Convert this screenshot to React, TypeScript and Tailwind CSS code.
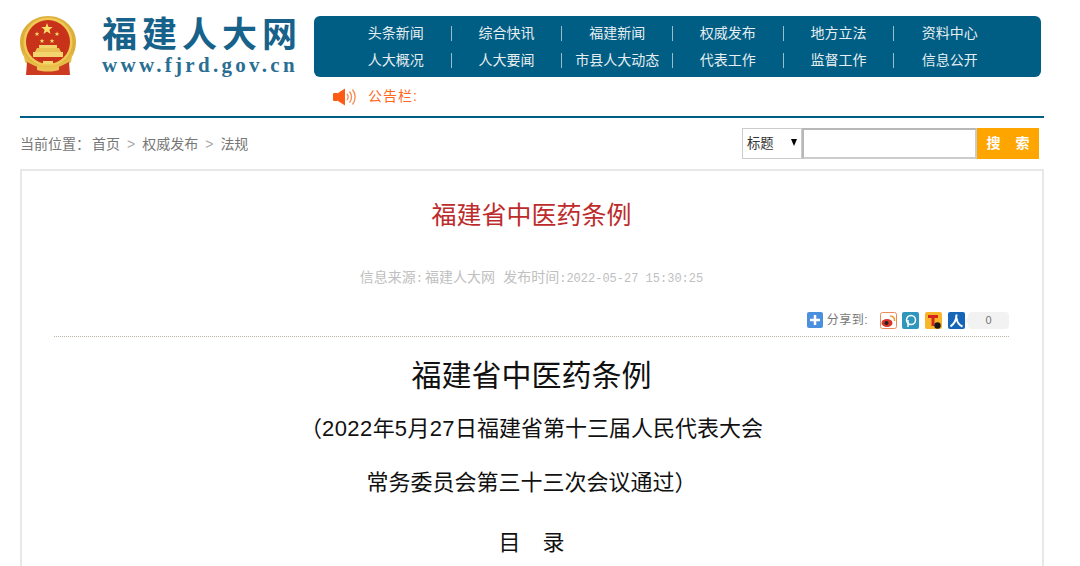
const sans = 'font-["Liberation_Sans","Noto_Sans_CJK_SC",sans-serif]';
const mono = 'font-["Liberation_Mono",monospace] text-[12px]';

const navRows = [
  ['头条新闻', '综合快讯', '福建新闻', '权威发布', '地方立法', '资料中心'],
  ['人大概况', '人大要闻', '市县人大动态', '代表工作', '监督工作', '信息公开'],
];

const star = (x: number, y: number, r: number) => {
  const pts: string[] = [];
  for (let i = 0; i < 10; i++) {
    const a = (Math.PI / 5) * i - Math.PI / 2;
    const d = i % 2 === 0 ? r : r * 0.42;
    pts.push(`${(x + Math.cos(a) * d).toFixed(1)},${(y + Math.sin(a) * d).toFixed(1)}`);
  }
  return <polygon key={`${x}-${y}`} points={pts.join(' ')} fill="#f7dc6a" />;
};

// national emblem, 56x60
const Emblem = () => (
  <svg width="56" height="60" viewBox="0 0 56 60" className="shrink-0">
    <path d="M28 0C13 0 0 11 0 26c0 11 6 20 14 25h28c8-5 14-14 14-25C56 11 43 0 28 0z" fill="#dcae3c" />
    <circle cx="28" cy="26" r="24.500" fill="#efc954" />
    <circle cx="28" cy="26" r="22" fill="#c8321a" />
    {star(27, 13, 6)}
    {star(17, 18, 2.500)}
    {star(37, 18, 2.500)}
    {star(22, 25, 2.500)}
    {star(32, 25, 2.500)}
    <rect x="19" y="29" width="18" height="3" fill="#f2d26a" />
    <path d="M17 32h22l2 4H15z" fill="#e9c253" />
    <rect x="13" y="36" width="30" height="5" fill="#f3d56e" />
    <path d="M3 34c4 10 13 16 25 16s21-6 25-16l-2 12-8 6H13l-8-6z" fill="#e6bb45" />
    <path d="M7 46l8 4c8 3 18 3 26 0l8-4 1 13H6z" fill="#cc3a22" />
    <path d="M17 49c7 3 15 3 22 0v5c-7 2-15 2-22 0z" fill="#ecc250" />
    <path d="M23 45h10v3H23z" fill="#f3d56e" />
  </svg>
);

const Speaker = () => (
  <svg width="24" height="18" viewBox="0 0 24 18">
    <rect x="0" y="5" width="5" height="8" rx="1" fill="#ff5a14" />
    <polygon points="5,5 12,0.500 12,17.500 5,13" fill="#ff5a14" />
    <path d="M14 6c1.500 2 1.500 4 0 6" stroke="#f58a52" strokeWidth="1.300" fill="none" />
    <path d="M16.500 3.500c2.600 3.500 2.600 7.500 0 11" stroke="#f58a52" strokeWidth="1.300" fill="none" />
    <path d="M19.500 1.500c3.500 4.500 3.500 10.500 0 15" stroke="#f58a52" strokeWidth="1.300" fill="none" />
  </svg>
);

const ShareIcons = () => (
  <>
    <svg width="17" height="17" viewBox="0 0 17 17" className="ml-[12px]">
      <rect x="0.500" y="0.500" width="16" height="16" rx="2" fill="#fff" stroke="#ee8a5a" />
      <ellipse cx="7" cy="11" rx="5.500" ry="4" fill="#d6352c" />
      <circle cx="6.500" cy="11" r="2" fill="#222" />
      <path d="M10 4c3 0 5 2 4.500 5" stroke="#f39a2c" strokeWidth="1.500" fill="none" />
    </svg>
    <svg width="17" height="17" viewBox="0 0 17 17" className="ml-[5px]">
      <rect width="17" height="17" rx="2" fill="#2f97bd" />
      <circle cx="9" cy="8" r="4.500" stroke="#fff" strokeWidth="1.500" fill="none" />
      <path d="M6 15V8" stroke="#fff" strokeWidth="1.500" />
    </svg>
    <svg width="17" height="17" viewBox="0 0 17 17" className="ml-[6px]">
      <rect width="17" height="17" rx="2" fill="#f8b62a" />
      <path d="M3 3h10v3H9.500v8h-3V6H3z" fill="#d6261c" />
      <circle cx="12.500" cy="13.500" r="3.200" fill="#1a1a1a" />
    </svg>
    <svg width="17" height="17" viewBox="0 0 17 17" className="ml-[6px]">
      <rect width="17" height="17" rx="2" fill="#1566b8" />
      <path d="M8.500 2.500c0 5-2 9-6 12M8.500 6c.5 4 2.500 7 6 8.500" stroke="#fff" strokeWidth="2" fill="none" />
    </svg>
  </>
);

export default function App() {
  return (
    <div className={`h-[566px] w-[1080px] overflow-hidden bg-white ${sans}`}>
      <div className="ml-5 w-[1024px]">
        <header className="flex pt-4">
          <div className="flex w-[294px] shrink-0 items-start">
            <Emblem />
            <div className="ml-[26px]">
              <div className="mt-[-1px] whitespace-nowrap text-[35px] leading-[40px] font-bold tracking-[5px] text-[#17628a]">
                福建人大网
              </div>
              <div className='mt-[-1px] whitespace-nowrap font-["Liberation_Serif",serif] text-[21px] leading-[22px] font-bold tracking-[3.300px] text-[#2a6f93]'>
                www.fjrd.gov.cn
              </div>
            </div>
          </div>
          <nav className="h-[61px] w-[727px] rounded-md bg-[#005d83] pt-[4px] pl-[27px]">
            <div className="grid w-[664px] grid-cols-6">
              {navRows.map((row) =>
                row.map((label, i) => (
                  <div key={label} className="flex h-[27px] items-center">
                    <span className="flex-1 text-center text-[14px] whitespace-nowrap text-[#e6eef2]">{label}</span>
                    {i < 5 && <span className="h-[15px] w-px bg-[#9dbccb]" />}
                  </div>
                )),
              )}
            </div>
          </nav>
        </header>

        <div className="box-content flex h-[39px] items-center border-b-2 border-[#005d83] pl-[313px]">
          <Speaker />
          <span className="ml-[11px] text-[14px] tracking-[1px] text-[#ff6a1f]">公告栏:</span>
        </div>

        <div className="mt-[10px] flex h-[31px] items-center justify-between pr-[5px]">
          <div className="flex items-center pt-[1px] text-[14px] text-[#777]">
            <span>当前位置：</span>
            <span className="ml-[2px]">首页</span>
            <span className="mx-[7px] text-[#aaa]">&gt;</span>
            <span>权威发布</span>
            <span className="mx-[7px] text-[#aaa]">&gt;</span>
            <span>法规</span>
          </div>
          <div className="flex h-[31px]">
            <div className="relative h-full w-[60px]">
              <select className="h-full w-full appearance-none border border-[#ccc] bg-white pl-[4px] text-[13.300px] text-[#333]">
                <option>标题</option>
              </select>
              <span className="pointer-events-none absolute top-[11px] right-[5px] h-0 w-0 border-x-[3.500px] border-t-[7px] border-x-transparent border-t-black" />
            </div>
            <input className="h-full w-[175px] border-2 border-[#b8b8b8] border-r-[#ccc] border-b-[#ccc] bg-white outline-none" />
            <button className="flex h-full w-[62px] items-center justify-center gap-[15px] bg-[#ffa500] text-[14px] font-bold text-white">
              <span>搜</span>
              <span>索</span>
            </button>
          </div>
        </div>

        <main className="mt-[10px] h-[500px] border-2 border-[#e8e8e8] pr-[33px] pl-[32px]">
          <h2 className="pt-[27px] text-center text-[25px] leading-[34px] text-[#bd2c2c]">福建省中医药条例</h2>
          <p className="mt-[35px] text-center text-[14px] leading-[20px] text-[#c0c0c0]">
            信息来源<span className={`${mono} mr-[2px]`}>:</span>福建人大网<span className={mono}> </span>
            <span className="ml-[1px]">发布时间</span><span className={mono}>:</span>
            <span className={mono}>2022-05-27 15:30:25</span>
          </p>
          <div className="mt-[22px] flex h-[18px] items-center justify-end">
            <svg width="16" height="16" viewBox="0 0 16 16">
              <rect width="16" height="16" rx="2" fill="#4a90dc" />
              <path d="M8 3v10M3 8h10" stroke="#fff" strokeWidth="2.500" />
            </svg>
            <span className="ml-[4px] text-[12px] tracking-[0.500px] text-[#777]">分享到:</span>
            <ShareIcons />
            <span className="relative ml-[3px] h-[17px] w-[41px] rounded-[4px] bg-[#f2f2f2] text-center text-[11px] leading-[17px] text-[#777]">
              <span className="absolute top-[6px] left-[-2px] h-[5px] w-[5px] rotate-45 bg-[#f2f2f2]" />
              0
            </span>
          </div>
          <div className="mt-[7px] border-t border-dotted border-[#bdb5a5]" />
          <article className="text-center text-[#111]">
            <h1 className="mt-[17px] text-[30px] leading-[44px]">福建省中医药条例</h1>
            <p className="mt-[4px] text-[22px] leading-[54px]">
              （<span className="tracking-[0.500px]">2022</span>年<span className="tracking-[0.500px]">5</span>月<span className="tracking-[0.500px]">27</span>日福建省第十三届人民代表大会
            </p>
            <p className="text-[22px] leading-[54px]">常务委员会第三十三次会议通过）</p>
            <p className="mt-[6px] text-[22px] leading-[54px]">目　录</p>
          </article>
        </main>
      </div>
    </div>
  );
}
